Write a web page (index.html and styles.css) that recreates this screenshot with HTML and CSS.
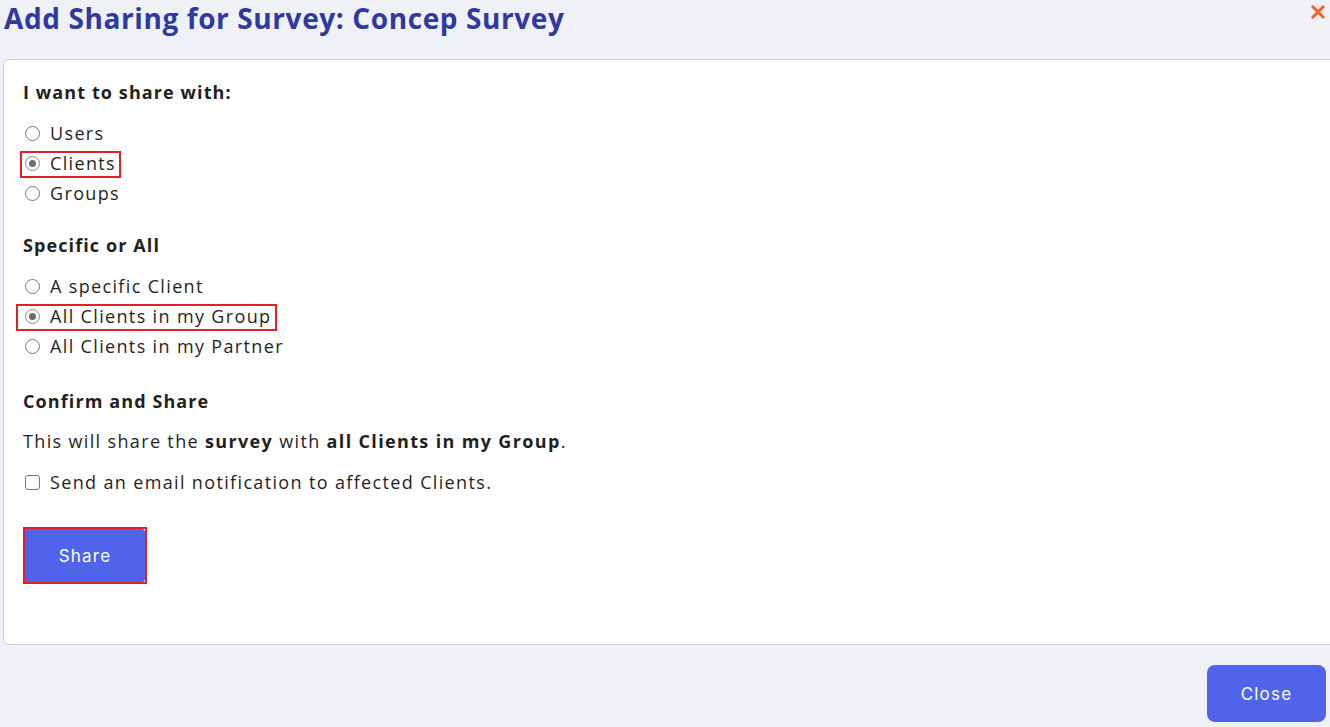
FILE: index.html
```html
<!DOCTYPE html>
<html>
<head>
<meta charset="utf-8">
<link rel="stylesheet" href="styles.css">
</head>
<body>
<div class="dialog">
  <div class="header">
    <h1 class="title">Add Sharing for Survey: Concep Survey</h1>
    <svg class="close-x" width="14" height="14" viewBox="0 0 14 14"><path d="M2 2 L12 12 M12 2 L2 12" stroke="#f2602e" stroke-width="3" stroke-linecap="square"/></svg>
  </div>
  <div class="panel">
    <div class="section-title first">I want to share with:</div>
    <div class="options">
      <label class="opt"><span class="radio"></span><span>Users</span></label>
      <label class="opt hl hl-clients"><span class="radio on"></span><span>Clients</span></label>
      <label class="opt"><span class="radio"></span><span>Groups</span></label>
    </div>
    <div class="section-title">Specific or All</div>
    <div class="options">
      <label class="opt"><span class="radio"></span><span>A specific Client</span></label>
      <label class="opt hl hl-group"><span class="radio on"></span><span>All Clients in my Group</span></label>
      <label class="opt"><span class="radio"></span><span>All Clients in my Partner</span></label>
    </div>
    <div class="section-title s3">Confirm and Share</div>
    <p class="summary">This will share the <b>survey</b> with <b>all Clients in my Group</b>.</p>
    <div class="options check">
      <label class="opt"><span class="checkbox"></span><span>Send an email notification to affected Clients.</span></label>
    </div>
    <div class="share-wrap"><button class="btn share">Share</button></div>
  </div>
  <div class="footer">
    <button class="btn close">Close</button>
  </div>
</div>
</body>
</html>
```
FILE: styles.css
```css
html, body {
  margin: 0;
  padding: 0;
  background: #f0f1f6;
  font-family: "Open Sans", Roboto, sans-serif;
  color: #1f1f1f;
  overflow: hidden;
}
.dialog {
  width: 1330px;
  height: 727px;
  display: flex;
  flex-direction: column;
}
.header {
  height: 59px;
  display: flex;
  justify-content: space-between;
  align-items: flex-start;
}
.title {
  margin: 0;
  padding: 2px 0 0 4px;
  font-size: 28px;
  line-height: 32px;
  font-weight: 700;
  color: #2e3a9f;
  letter-spacing: 0.6px;
}
.close-x {
  margin: 5px 5px 0 0;
  flex: none;
}
.panel {
  margin-left: 3px;
  margin-right: -10px;
  height: 586px;
  box-sizing: border-box;
  background: #fff;
  border: 1px solid #d0d0d4;
  border-radius: 5px;
  padding: 20px 0 0 0;
}
.section-title {
  font-size: 18px;
  font-weight: 700;
  line-height: 24px;
  letter-spacing: 1.1px;
  margin-top: 25px;
  padding-left: 19px;
}
.section-title.first { margin-top: 0; }
.section-title.s3 { margin-top: 28px; }
.options {
  margin-top: 14px;
  display: flex;
  flex-direction: column;
  align-items: flex-start;
}
.options.check { margin-top: 14px; }
.opt {
  position: relative;
  display: flex;
  align-items: center;
  gap: 10px;
  height: 30px;
  font-size: 18px;
  letter-spacing: 1.35px;
  padding-left: 21px;
}
.radio {
  width: 13px;
  height: 13px;
  border: 1px solid #767676;
  border-radius: 50%;
  position: relative;
  flex: none;
}
.radio.on { border-color: #8a8a8a; }
.radio.on::after {
  content: "";
  position: absolute;
  left: 3px;
  top: 3px;
  width: 7px;
  height: 7px;
  border-radius: 50%;
  background: #6d6d6d;
}
.hl::after {
  content: "";
  position: absolute;
  top: 3px;
  bottom: 0;
  border: 2px solid #e3202a;
  pointer-events: none;
}
.hl-clients::after { left: 16px; right: -5px; }
.hl-group::after { left: 12px; right: -6px; }
.summary {
  margin: 16px 0 0 19px;
  font-size: 18px;
  line-height: 24px;
  letter-spacing: 1.35px;
}
.summary b { font-weight: 700; }
.checkbox {
  width: 15px;
  height: 15px;
  border: 1px solid #767676;
  border-radius: 3px;
  box-sizing: border-box;
  flex: none;
}
.share-wrap {
  margin: 30px 0 0 19px;
  width: 124px;
  height: 57px;
  box-sizing: border-box;
  border: 2px solid #e3202a;
}
.btn {
  background: #5064eb;
  color: #fff;
  border: none;
  font-family: Inter, Roboto, sans-serif;
  font-size: 17px;
  letter-spacing: 1.2px;
  cursor: pointer;
}
.share {
  display: block;
  width: 120px;
  height: 53px;
  border-radius: 0 3px 3px 0;
}
.footer {
  flex: 1;
  display: flex;
  justify-content: flex-end;
  align-items: flex-start;
  padding: 20px 4px 0 0;
}
.close {
  width: 119px;
  height: 57px;
  border-radius: 8px;
}
```
